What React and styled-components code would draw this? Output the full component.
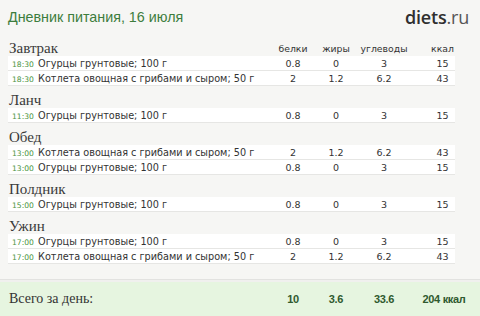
import React from "react";
import styled, { createGlobalStyle } from "styled-components";

const Global = createGlobalStyle`
  html, body { margin: 0; padding: 0; background: #f6f6f4; }
  body { width: 480px; height: 316px; overflow: hidden; }
`;

const Page = styled.div`
  width: 480px;
  height: 316px;
  display: flex;
  flex-direction: column;
  background: #f6f6f4;
  font-family: "DejaVu Sans", Verdana, sans-serif;
  color: #333;
`;

const Header = styled.header`
  height: 34px;
  display: flex;
  align-items: center;
  justify-content: space-between;
  padding: 0 11px 0 8px;
  box-sizing: border-box;
`;

const Title = styled.h1`
  margin: 0;
  font-family: "Liberation Sans", Arial, sans-serif;
  font-weight: normal;
  font-size: 14.3px;
  color: #3d7d3d;
`;

const Logo = styled.div`
  font-family: "Open Sans", sans-serif;
  font-size: 18px;
  color: #2f2f2f;
  font-weight: 600;
  letter-spacing: -0.2px;
  span { font-weight: 400; color: #555; }
`;

const Body = styled.div`
  flex: 1;
  padding: 7px 0 0 8px;
  display: flex;
  flex-direction: column;
  gap: 7px;
  border-bottom: 1px solid #e2e2e0;
`;

const Section = styled.section`
  display: flex;
  flex-direction: column;
`;

const Grid = styled.div`
  display: grid;
  grid-template-columns: 264px 42px 44px 52px 45px;
  align-items: center;
  width: 447px;
`;

const HeadRow = styled(Grid)`
  height: 15px;
`;

const Meal = styled.h2`
  margin: 0;
  font-family: "Liberation Serif", "Times New Roman", serif;
  font-weight: normal;
  font-size: 15px;
  line-height: 15px;
  color: #3a3a3a;
  padding-left: 1px;
`;

const ColLabel = styled.div`
  font-size: 9.3px;
  text-align: center;
  color: #333;
  padding-left: ${(p) => (p.$last ? "20px" : "0")};
`;

const Row = styled(Grid)`
  height: 15px;
  background: #fff;
  border-bottom: 1px solid #e6e6e4;
  box-sizing: border-box;
`;

const Name = styled.div`
  display: flex;
  align-items: baseline;
  gap: 6px;
  padding-left: 4px;
  font-size: 9.7px;
  white-space: nowrap;
  color: #333;
`;

const Time = styled.span`
  font-size: 7.6px;
  color: #4a9440;
  width: 20px;
`;

const Num = styled.div`
  font-size: 9.5px;
  text-align: center;
  padding-left: ${(p) => (p.$last ? "20px" : "0")};
`;

const Totals = styled(Grid)`
  height: 36px;
  width: 480px;
  padding-left: 8px;
  box-sizing: border-box;
  grid-template-columns: 264px 42px 44px 52px 60px;
  background: #e6f5e0;
  border-top: 2px solid #f0f0ee;
`;

const TotalLabel = styled.div`
  font-family: "Liberation Serif", "Times New Roman", serif;
  font-size: 14px;
  color: #333;
  padding-left: 1px;
`;

const TotalNum = styled.div`
  font-family: "Liberation Sans", Arial, sans-serif;
  font-weight: bold;
  font-size: 11px;
  color: #2f5a2f;
  text-align: center;
  letter-spacing: -0.3px;
  white-space: nowrap;
  padding-left: ${(p) => (p.$last ? "8px" : "0")};
`;

const cucumber = { name: "Огурцы грунтовые; 100 г", v: ["0.8", "0", "3", "15"] };
const cutlet = { name: "Котлета овощная с грибами и сыром; 50 г", v: ["2", "1.2", "6.2", "43"] };

const meals = [
  { title: "Завтрак", items: [["18:30", cucumber], ["18:30", cutlet]] },
  { title: "Ланч", items: [["11:30", cucumber]] },
  { title: "Обед", items: [["13:00", cutlet], ["13:00", cucumber]] },
  { title: "Полдник", items: [["15:00", cucumber]] },
  { title: "Ужин", items: [["17:00", cucumber], ["17:00", cutlet]] },
];

const cols = ["белки", "жиры", "углеводы", "ккал"];

export default function App() {
  return (
    <Page>
      <Global />
      <Header>
        <Title>Дневник питания, 16 июля</Title>
        <Logo>
          diets<span>.ru</span>
        </Logo>
      </Header>
      <Body>
        {meals.map((m, i) => (
          <Section key={m.title}>
            <HeadRow>
              <Meal>{m.title}</Meal>
              {i === 0 &&
                cols.map((c, k) => (
                  <ColLabel key={c} $last={k === 3}>
                    {c}
                  </ColLabel>
                ))}
            </HeadRow>
            {m.items.map(([t, f], j) => (
              <Row key={j}>
                <Name>
                  <Time>{t}</Time>
                  {f.name}
                </Name>
                {f.v.map((v, k) => (
                  <Num key={k} $last={k === 3}>
                    {v}
                  </Num>
                ))}
              </Row>
            ))}
          </Section>
        ))}
      </Body>
      <Totals>
        <TotalLabel>Всего за день:</TotalLabel>
        <TotalNum>10</TotalNum>
        <TotalNum>3.6</TotalNum>
        <TotalNum>33.6</TotalNum>
        <TotalNum $last>204 ккал</TotalNum>
      </Totals>
    </Page>
  );
}
